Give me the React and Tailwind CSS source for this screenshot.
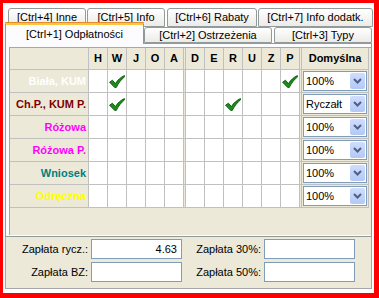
import React from "react";

const Check = () => (
  <svg width="16" height="13" viewBox="0 0 16 13">
    <path
      d="M0.6 7.2 L3.4 5.2 L6.4 8.6 C8.8 4.8 11.8 2.2 15.4 0.6 L15.6 1.8 C12.2 4.4 9.6 8 7.2 12.6 L5.8 12.6 Z"
      fill="#1c8c1c"
      stroke="#0a560a"
      strokeWidth="0.9"
      strokeLinejoin="round"
    />
  </svg>
);

const Chevron = () => (
  <svg width="9" height="6" viewBox="0 0 9 6">
    <path d="M1 1 L4.5 4.5 L8 1" fill="none" stroke="#4D6185" strokeWidth="2" />
  </svg>
);

const Combo = ({ v }) => (
  <div className="h-[20px] w-[64px] border border-[#7F9DB9] bg-white flex items-center justify-between pl-[2px] pr-px">
    <span className="text-[11px] text-black leading-none">{v}</span>
    <div className="w-[15px] h-[16px] rounded-[2px] bg-gradient-to-b from-[#CFDDFE] to-[#B4C8F6] flex items-center justify-center">
      <Chevron />
    </div>
  </div>
);

const cols = ["H", "W", "J", "O", "A", "|", "D", "E", "R", "U", "Z", "P", "|"];

const rows = [
  { label: "Biała, KUM", color: "text-white", checks: ["W", "P"], def: "100%" },
  { label: "Ch.P., KUM P.", color: "text-[#800000]", checks: ["W", "R"], def: "Ryczałt" },
  { label: "Różowa", color: "text-[#FF00FF]", checks: [], def: "100%" },
  { label: "Różowa P.", color: "text-[#FF00FF]", checks: [], def: "100%" },
  { label: "Wniosek", color: "text-[#008080]", checks: [], def: "100%" },
  { label: "Odręczna", color: "text-[#FFFF00]", checks: [], def: "100%" },
];

export default function App() {
  return (
    <div className="w-[379px] h-[298px] bg-[#FF0000] pl-[3px] pt-[3px] pr-[5px] pb-[5px] font-['Liberation_Sans',Arial,sans-serif] text-black">
      <div className="w-full h-full bg-white flex flex-col">
        {/* tab row 1 */}
        <div className="flex h-[24px] pt-[5px] pl-[5px]">
          <div className="w-[78px] h-[19px] border border-[#919B9C] rounded-t-[3px] bg-gradient-to-b from-white to-[#ECEBE6] flex items-center justify-center text-[11px]">[Ctrl+4] Inne</div>
          <div className="ml-[1px] w-[78px] h-[19px] border border-[#919B9C] rounded-t-[3px] bg-gradient-to-b from-white to-[#ECEBE6] flex items-center justify-center text-[11px]">[Ctrl+5] Info</div>
          <div className="ml-[2px] w-[90px] h-[19px] border border-[#919B9C] rounded-t-[3px] bg-gradient-to-b from-white to-[#ECEBE6] flex items-center justify-center text-[11px]">[Ctrl+6] Rabaty</div>
          <div className="ml-[1px] w-[115px] h-[19px] border border-[#919B9C] rounded-t-[3px] bg-gradient-to-b from-white to-[#ECEBE6] flex items-center justify-center text-[11px]">[Ctrl+7] Info dodatk.</div>
        </div>
        {/* tab row 2 */}
        <div className="flex items-end h-[16px] pl-[2px]">
          <div className="relative z-10 -mb-px w-[139px] h-[22px] border border-b-0 border-[#919B9C] rounded-t-[3px] bg-[#FCFCFE] flex flex-col">
            <div className="h-[1px] bg-[#E68B2C] rounded-t-[2px] -mx-px -mt-px"></div>
            <div className="h-[2px] bg-[#FFC73C]"></div>
            <div className="flex-1 flex items-center justify-center text-[11px] pb-[1px]">[Ctrl+1] Odpłatności</div>
          </div>
          <div className="w-[128px] h-[16px] border border-[#919B9C] rounded-t-[3px] bg-gradient-to-b from-white to-[#ECEBE6] flex items-center justify-center text-[11px]">[Ctrl+2] Ostrzeżenia</div>
          <div className="ml-[2px] w-[98px] h-[16px] border border-[#919B9C] rounded-t-[3px] bg-gradient-to-b from-white to-[#ECEBE6] flex items-center justify-center text-[11px]">[Ctrl+3] Typy</div>
        </div>
        {/* tab panel */}
        <div className="ml-[2px] w-[367px] h-[194px] border border-[#919B9C] bg-[#FCFCFE] pt-[3px] pl-[3px]">
          <div className="w-[362px] h-[188px] border-l border-t border-[#A7A6AA] bg-[#ECE9D8]">
            <div className="grid w-fit gap-px bg-[#C0C0C0] pr-px pb-px grid-cols-[78px_18px_18px_18px_18px_18px_1px_18px_18px_18px_18px_18px_18px_1px_66px] grid-rows-[21px_22px_22px_22px_22px_22px_22px]">
              <div className="bg-[#ECE9D8]"></div>
              {cols.map((c, i) => (
                <div key={i} className="bg-[#ECE9D8] flex items-center justify-center text-[11px] font-bold">
                  {c === "|" ? "" : c}
                </div>
              ))}
              <div className="bg-[#ECE9D8] flex items-center justify-center text-[11px] font-bold">Domyślna</div>
              {rows.map((r, ri) => (
                <React.Fragment key={ri}>
                  <div className={`bg-[#ECE9D8] flex items-center justify-end pr-[2px] text-[11px] font-bold ${r.color}`}>
                    {r.label}
                  </div>
                  {cols.map((c, ci) =>
                    c === "|" ? (
                      <div key={ci} className="bg-[#ECE9D8]"></div>
                    ) : (
                      <div key={ci} className="bg-white flex items-center justify-center">
                        {r.checks.includes(c) ? <Check /> : null}
                      </div>
                    )
                  )}
                  <div className="bg-[#ECE9D8] flex items-center justify-center">
                    <Combo v={r.def} />
                  </div>
                </React.Fragment>
              ))}
            </div>
          </div>
        </div>
        {/* bottom panel */}
        <div className="ml-[2px] w-[367px] h-[52px] border-x border-b border-[#A7A6AA] bg-[#ECE9D8] pt-[2px] flex flex-col gap-[3px] text-[11px]">
          <div className="flex items-center h-[20px]">
            <div className="w-[82px] text-right">Zapłata rycz.:</div>
            <div className="ml-[3px] w-[91px] h-[20px] border border-[#7F9DB9] bg-white flex items-center justify-end pr-[4px]">4.63</div>
            <div className="w-[79px] text-right">Zapłata 30%:</div>
            <div className="ml-[3px] w-[91px] h-[20px] border border-[#7F9DB9] bg-white"></div>
          </div>
          <div className="flex items-center h-[20px]">
            <div className="w-[82px] text-right">Zapłata BZ:</div>
            <div className="ml-[3px] w-[91px] h-[20px] border border-[#7F9DB9] bg-white"></div>
            <div className="w-[79px] text-right">Zapłata 50%:</div>
            <div className="ml-[3px] w-[91px] h-[20px] border border-[#7F9DB9] bg-white"></div>
          </div>
        </div>
      </div>
    </div>
  );
}
